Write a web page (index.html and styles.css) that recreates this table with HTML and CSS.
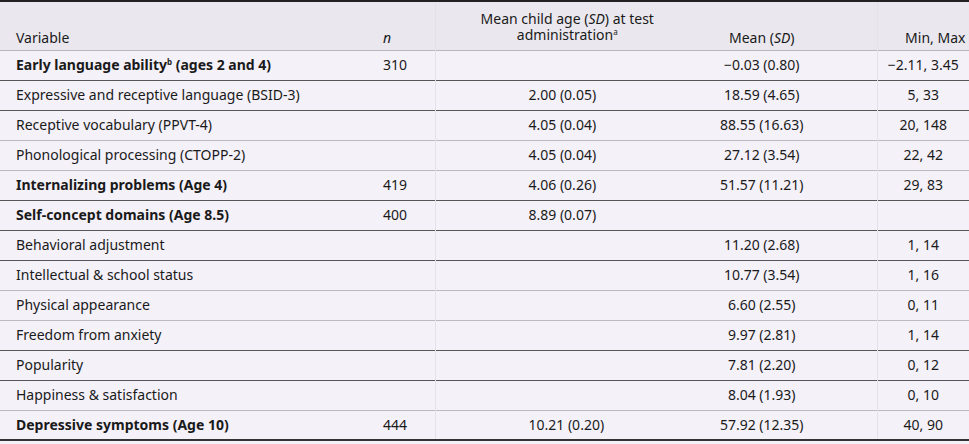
FILE: index.html
```html
<!DOCTYPE html>
<html>
<head>
<meta charset="utf-8">
<link rel="stylesheet" href="styles.css">
</head>
<body>
<table class="tbl">
  <colgroup>
    <col class="c1"><col class="c2"><col class="c3"><col class="c4"><col class="c5">
  </colgroup>
  <thead>
    <tr>
      <th class="var">Variable</th>
      <th class="n"><i>n</i></th>
      <th class="age"><span class="hl">Mean child age (<i>SD</i>) at test</span><span class="hl">administration<sup>a</sup></span></th>
      <th class="mean">Mean (<i>SD</i>)</th>
      <th class="mm">Min, Max</th>
    </tr>
  </thead>
  <tbody>
    <tr class="dk"><td class="var b">Early language ability<sup>b</sup> (ages 2 and 4)</td><td class="n">310</td><td class="age"></td><td class="mean">−0.03 (0.80)</td><td class="mm">−2.11, 3.45</td></tr>
    <tr class="dk"><td class="var">Expressive and receptive language (BSID-3)</td><td class="n"></td><td class="age">2.00 (0.05)</td><td class="mean">18.59 (4.65)</td><td class="mm">5, 33</td></tr>
    <tr class="lt"><td class="var">Receptive vocabulary (PPVT-4)</td><td class="n"></td><td class="age">4.05 (0.04)</td><td class="mean">88.55 (16.63)</td><td class="mm">20, 148</td></tr>
    <tr class="lt"><td class="var">Phonological processing (CTOPP-2)</td><td class="n"></td><td class="age">4.05 (0.04)</td><td class="mean">27.12 (3.54)</td><td class="mm">22, 42</td></tr>
    <tr class="dk"><td class="var b">Internalizing problems (Age 4)</td><td class="n">419</td><td class="age">4.06 (0.26)</td><td class="mean">51.57 (11.21)</td><td class="mm">29, 83</td></tr>
    <tr class="dk"><td class="var b">Self-concept domains (Age 8.5)</td><td class="n">400</td><td class="age">8.89 (0.07)</td><td class="mean"></td><td class="mm"></td></tr>
    <tr class="dk"><td class="var">Behavioral adjustment</td><td class="n"></td><td class="age"></td><td class="mean">11.20 (2.68)</td><td class="mm">1, 14</td></tr>
    <tr class="lt"><td class="var">Intellectual &amp; school status</td><td class="n"></td><td class="age"></td><td class="mean">10.77 (3.54)</td><td class="mm">1, 16</td></tr>
    <tr class="lt"><td class="var">Physical appearance</td><td class="n"></td><td class="age"></td><td class="mean">6.60 (2.55)</td><td class="mm">0, 11</td></tr>
    <tr class="dk"><td class="var">Freedom from anxiety</td><td class="n"></td><td class="age"></td><td class="mean">9.97 (2.81)</td><td class="mm">1, 14</td></tr>
    <tr class="dk"><td class="var">Popularity</td><td class="n"></td><td class="age"></td><td class="mean">7.81 (2.20)</td><td class="mm">0, 12</td></tr>
    <tr class="lt"><td class="var">Happiness &amp; satisfaction</td><td class="n"></td><td class="age"></td><td class="mean">8.04 (1.93)</td><td class="mm">0, 10</td></tr>
    <tr class="last"><td class="var b">Depressive symptoms (Age 10)</td><td class="n">444</td><td class="age">10.21 (0.20)</td><td class="mean">57.92 (12.35)</td><td class="mm">40, 90</td></tr>
  </tbody>
</table>
</body>
</html>
```
FILE: styles.css
```css
html, body {
  margin: 0;
  padding: 0;
  background: #f4f1f9;
}
.tbl {
  width: 969px;
  border-collapse: collapse;
  table-layout: fixed;
  font-family: "Noto Sans", "Open Sans", sans-serif;
  font-size: 14px;
  color: #1a1a1a;
  border-top: 2px solid #222;
}
.c1 { width: 370px; }
.c2 { width: 65px; }
.c3 { width: 264px; }
.c4 { width: 178px; }
.c5 { width: 92px; }
thead tr {
  background: #eae8ee;
  height: 49px;
  border-bottom: 1px solid #b9b7bd;
}
th {
  font-weight: normal;
  vertical-align: bottom;
  padding: 0 0 4px 0;
  line-height: 17px;
}
th.age {
  padding-bottom: 7px;
}
.hl {
  display: block;
  line-height: 16px;
  height: 16px;
}
th.age, td.age, th.mm, td.mm {
  border-left: 1px solid #e4e1ea;
}
tbody tr {
  height: 30px;
}
td {
  padding: 0;
  line-height: 16px;
  vertical-align: middle;
}
tr.dk { border-bottom: 1px solid #555; }
tr.lt { border-bottom: 1px solid #bcbac0; }
tr.last { border-bottom: 2px solid #333; }
.var { text-align: left; padding-left: 16px; }
.b { font-weight: bold; }
.n { text-align: left; padding-left: 13px; }
.age { text-align: left; padding-left: 93px; }
th.age { text-align: center; padding-left: 0; }
.mean { text-align: center; padding-right: 52px; }
.mm { text-align: center; }
th.mm { padding-left: 24px; }
sup { font-size: 8px; line-height: 0; vertical-align: 5px; }
i { font-style: italic; }
```
